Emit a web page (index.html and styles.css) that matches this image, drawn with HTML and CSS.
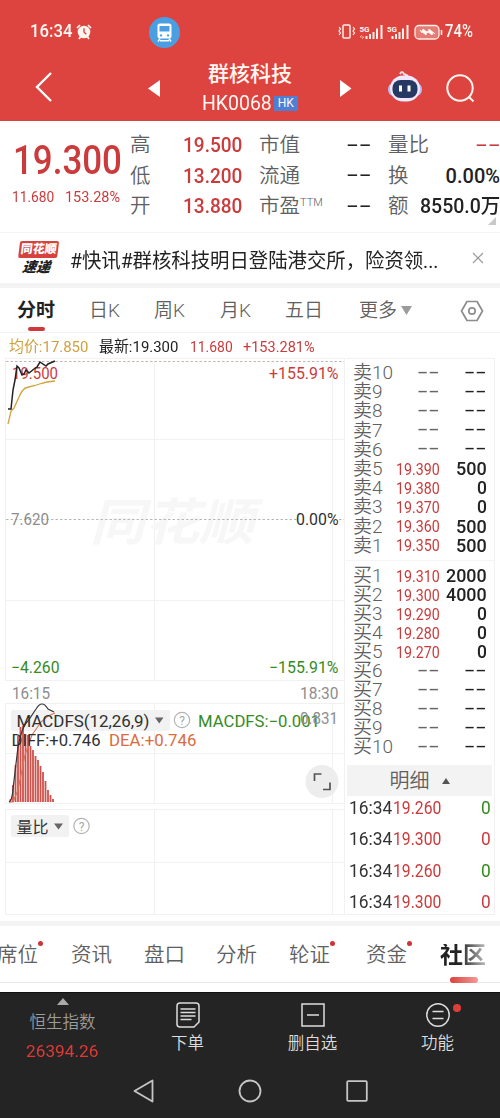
FILE: index.html
```html
<!DOCTYPE html>
<html lang="zh-CN">
<head>
<meta charset="utf-8">
<title>群核科技 HK0068</title>
<link rel="stylesheet" href="styles.css">
</head>
<body>
<header class="top">
  <div class="status">
    <span class="clock" data-w="42">16:34</span>
    <svg class="alarm" width="16" height="16" viewBox="0 0 16 16"><circle cx="8" cy="8" r="6.3" fill="#fff5ee"/><path d="M1 4 4 1M12 1l3 3M3 15l2-3M13 15l-2-3" stroke="#fff5ee" stroke-width="1.7"/><path d="M8 4.3V8l2.3 2.2" fill="none" stroke="#dd443f" stroke-width="1.4"/></svg>
    <svg class="train" width="31" height="31" viewBox="0 0 31 31"><circle cx="15.5" cy="15.5" r="15.5" fill="#4a9fe3"/><path fill="#fff" fill-rule="evenodd" d="M11 6.5h9q2.5 0 2.5 2.5v10q0 2.500-2.500 2.500h-9q-2.500 0-2.500-2.500V9q0-2.500 2.500-2.500zM10.500 9v5.500h10V9zM12 17.200a1.200 1.200 0 1 0 .1 0zM19 17.200a1.200 1.200 0 1 0 .1 0z"/><path d="m11 21.500-2 3M20 21.500l2 3M11 23.800h9" stroke="#fff" stroke-width="1.500"/></svg>
    <div class="signals">
      <svg width="105" height="18" viewBox="0 0 105 18" fill="none" stroke="#fff0e9">
        <rect x="5" y="2" width="7" height="13" rx="1" stroke-width="1.500"/><path d="M1 4l1.500 2L1 8l1.500 2L1 12M15 4l1.500 2L15 8l1.500 2L15 12" stroke-width="1.200"/>
        <path d="M28.500 16v-3M32 16v-5M35.500 16v-7M39 16V5.500M43.500 16V2M54.500 16v-3M58 16v-5M61.500 16V9M65 16V5.500M69.500 16V2" stroke-width="2"/>
        <path d="m24 12-2 2h4l-2 2" stroke="#ffab91"/>
        <text class="g5" x="21.500" y="8.500">5G</text><text class="g5" x="49" y="8.500">5G</text>
        <rect x="77" y="2.500" width="24" height="13.500" rx="4" stroke-width="1.300" fill="#e47b74"/><path d="M103.500 7v5" stroke-width="1.600"/><path d="m82 7 6 5 1-4 5 4 1-3 2 2-6-5-1 4-5-4-1 4z" fill="#fff"/>
      </svg>
      <span class="clock" data-w="28">74%</span>
    </div>
  </div>
  <div class="nav">
    <svg width="18" height="30" viewBox="0 0 18 30"><path d="M16 1 2 15l14 14" fill="none" stroke="#fff" stroke-width="2.400"/></svg>
    <svg class="prev" width="12" height="17" viewBox="0 0 12 17"><path d="M12 0v17L0 8.500z" fill="#fff"/></svg>
    <div class="name"><h1>群核科技</h1><p><span class="code" data-w="70">HK0068</span><b>HK</b></p></div>
    <svg class="next" width="12" height="17" viewBox="0 0 12 17"><path d="M0 0v17l11.500-8.500z" fill="#fff"/></svg>
    <svg class="bot" width="34" height="32" viewBox="0 0 34 32"><path d="M12 3q2-4 4 0 2 1 4 2" fill="none" stroke="#ffdeda" stroke-width="2"/><rect x="0" y="12" width="34" height="13" rx="6" fill="#bdb9ef"/><rect x="2" y="4.500" width="30" height="26" rx="13" fill="#eee9ff"/><rect x="4.500" y="9" width="25" height="18" rx="8" fill="#263963"/><path d="M12.500 14.500v6M21 14.500v6" stroke="#fff" stroke-width="3"/></svg>
    <svg class="find" width="29" height="29" viewBox="0 0 29 29" fill="none" stroke="#fff4ef" stroke-width="2"><circle cx="14" cy="14" r="12.700"/><path d="m22.500 22.500 5 5"/></svg>
  </div>
</header>

<section class="quote">
  <div class="last">
    <strong data-w="109">19.300</strong>
    <p><span data-w="42.500">11.680</span><span data-w="55">153.28%</span></p>
  </div>
  <dl class="facts f1"><dt>高</dt><dd class="up"><span data-w="59">19.500</span></dd><dt>低</dt><dd class="up"><span data-w="59">13.200</span></dd><dt>开</dt><dd class="up"><span data-w="59">13.880</span></dd></dl>
  <dl class="facts f2"><dt>市值</dt><dd><i data-w="25">--</i></dd><dt>流通</dt><dd><i data-w="25">--</i></dd><dt>市盈<sup>TTM</sup></dt><dd><i data-w="25">--</i></dd></dl>
  <dl class="facts f3"><dt>量比</dt><dd class="up"><i data-w="25">--</i></dd><dt>换</dt><dd><span data-w="54">0.00%</span></dd><dt>额</dt><dd><span data-w="80">8550.0万</span></dd></dl>
  <svg class="corner" width="8" height="8" viewBox="0 0 8 8"><path d="M8 0v8H0z" fill="#c9c9c9"/></svg>
</section>

<section class="news">
  <div class="brand"><span>同花顺</span><em>速递</em></div>
  <p data-w="368">#快讯#群核科技明日登陆港交所，险资领...</p>
  <svg width="12" height="12" viewBox="0 0 12 12"><path d="m1 1 10 10M11 1 1 11" stroke="#9a9a9a" stroke-width="1.200"/></svg>
</section>

<nav class="periods">
  <span class="on">分时</span><span>日K</span><span>周K</span><span>月K</span><span>五日</span>
  <span class="more">更多<svg width="11" height="9" viewBox="0 0 11 9"><path d="M0 0h11L5.500 9z" fill="#9b9b9b"/></svg></span>
  <svg class="gear" width="24" height="22" viewBox="0 0 24 22" fill="none" stroke="#8d8d8d" stroke-width="1.700"><path d="M7 1.500h10L22.500 11 17 20.500H7L1.500 11z" stroke-linejoin="round"/><circle cx="12" cy="11" r="3.200"/></svg>
</nav>

<section class="legend"><span class="gold" data-w="79">均价:17.850</span><span data-w="79">最新:19.300</span><span class="up" data-w="43">11.680</span><span class="up" data-w="72">+153.281%</span></section>

<main class="market">
  <svg class="charts" width="346" height="563" viewBox="0 358 346 563">
    <g class="grid"><path d="M5 358.500h339M5 439.500h339M5 600.500h339M5 680.500h339M5.500 358v323M154.500 362v319M332.500 362v319M5 703.500h339M5 753.500h339M5 803.500h339M5.500 703v101M154.500 703v101M332.500 703v101M5 809.500h339M5 862.500h339M5 914.500h339M5.500 809v106M154.500 809v106M332.500 809v106M344.500 358v557"/></g>
    <text class="mark" x="90" y="540" textLength="164" lengthAdjust="spacingAndGlyphs">同花顺</text>
    <path d="M6 361.500h338" stroke="#c4b5ae" stroke-dasharray="2.500 2"/>
    <path d="M6 519.500h338" stroke="#b7b7b7" stroke-dasharray="2.500 2"/>
    <rect x="297" y="515" width="41" height="9" fill="#fff"/>
    <path d="M8 424l3-13 3-3 5-11q4-9 8-9.500l8-2 6-2 6-1.500 8-1" fill="none" stroke="#d0a43c" stroke-width="1.300"/>
    <g class="num">
      <text class="red" x="12" y="378.500" textLength="46" lengthAdjust="spacingAndGlyphs">19.500</text>
      <text class="red" x="269" y="378.500" textLength="69.500" lengthAdjust="spacingAndGlyphs">+155.91%</text>
      <text class="gray" x="11" y="524.500" textLength="38" lengthAdjust="spacingAndGlyphs">7.620</text>
      <text x="296" y="524.500" textLength="42.500" lengthAdjust="spacingAndGlyphs">0.00%</text>
      <text class="green" x="11" y="673" textLength="48.500" lengthAdjust="spacingAndGlyphs">−4.260</text>
      <text class="green" x="269" y="673" textLength="69.500" lengthAdjust="spacingAndGlyphs">−155.91%</text>
      <text class="gray" x="12" y="699" textLength="38" lengthAdjust="spacingAndGlyphs">16:15</text>
      <text class="gray" x="300" y="699" textLength="38.500" lengthAdjust="spacingAndGlyphs">18:30</text>
    </g>
    <path d="M8 409h3l2-19 2-10 2-14 2 2 3 7 2-1 2-4 3 3 5-4 3-2 3-5 6 4 2-2 7-3" fill="none" stroke="#222" stroke-width="1.500"/>
    <rect x="11" y="710" width="159" height="21" rx="2" fill="#f2f2f2"/>
    <path d="M10.500 802v-3M13 802v-17M15.500 802v-37M18 802v-66M20.500 802v-75M23 802v-76M25.500 802v-68M28 802v-67M30.500 802v-56M33 802v-52M35.500 802v-46M38 802v-42M40.500 802v-36M43 802v-30M45.500 802v-21M48 802v-12M50.500 802v-7M53 802v-3" stroke="#cf504b" stroke-width="1.800"/>
    <path d="M9 802h4l5-12 7-35 7-20 9-13 7-6 7-3" fill="none" stroke="#dc7556" stroke-width="1.100"/>
    <path d="M9 802q3-1 4-13l5-42q4-21 10-26l8-12q6-10 12 0l6 3" fill="none" stroke="#363636" stroke-width="1.200"/>
    <g class="num">
      <text x="16.500" y="726.500" textLength="133" lengthAdjust="spacingAndGlyphs">MACDFS(12,26,9)</text>
      <text x="198" y="726.500" textLength="122" lengthAdjust="spacingAndGlyphs" class="green">MACDFS:−0.001</text>
      <text class="gray" x="300" y="724" textLength="38" lengthAdjust="spacingAndGlyphs">0.831</text>
      <text x="11.500" y="745.500" textLength="89" lengthAdjust="spacingAndGlyphs">DIFF:+0.746</text>
      <text class="orange" x="109" y="745.500" textLength="87.500" lengthAdjust="spacingAndGlyphs">DEA:+0.746</text>
    </g>
    <path d="M155 717.500h8.500l-4.250 6z" fill="#666"/>
    <g fill="none" stroke="#b4b4b4" stroke-width="1.200"><circle cx="182" cy="720" r="7.700"/><circle cx="81.500" cy="826" r="7.700"/></g>
    <text class="help" x="182" y="724.500">?</text><text class="help" x="81.500" y="830.500">?</text>
    <circle cx="322" cy="781.500" r="16.500" fill="#ededed"/>
    <path d="M314.500 781v-7h7M330 782.500v7h-7" fill="none" stroke="#555" stroke-width="1.700"/>
    <rect x="11" y="815" width="58" height="22" rx="2" fill="#f2f2f2"/>
    <text class="ratio" x="16.500" y="832.500">量比</text><path d="M54 823.500h9l-4.500 6z" fill="#666"/>
  </svg>
  <aside class="book">
    <ul class="sell" id="sell"></ul>
    <ul class="buy" id="buy"></ul>
    <div class="detail">明细<svg width="8" height="6" viewBox="0 0 8 6"><path d="M0 6h8L4 0z" fill="#555"/></svg></div>
    <ul class="ticks">
      <li><span data-w="43">16:34</span><span class="up" data-w="48">19.260</span><span class="down" data-w="10">0</span></li>
      <li><span data-w="43">16:34</span><span class="up" data-w="48">19.300</span><span class="up" data-w="10">0</span></li>
      <li><span data-w="43">16:34</span><span class="up" data-w="48">19.260</span><span class="down" data-w="10">0</span></li>
      <li><span data-w="43">16:34</span><span class="up" data-w="48">19.300</span><span class="up" data-w="10">0</span></li>
    </ul>
  </aside>
</main>

<nav class="sections"><span class="dot">席位</span><span>资讯</span><span>盘口</span><span>分析</span><span class="dot">轮证</span><span class="dot">资金</span><span class="current">社区</span></nav>

<footer>
  <div class="actions">
    <div class="index"><svg width="12" height="7" viewBox="0 0 12 7"><path d="M0 7h12L6 0z" fill="#aaa"/></svg><span>恒生指数</span><b data-w="72">26394.26</b></div>
    <div><svg width="24" height="26" viewBox="0 0 24 26" fill="none" stroke="#ddd" stroke-width="1.500"><path d="M4 1h16q3 0 3 3v16l-5 5H4q-3 0-3-3V4q0-3 3-3zM4.500 7h15M4.500 10.500h15M4.500 14h15M4.500 17.500h11"/></svg><span>下单</span></div>
    <div><svg width="24" height="26" viewBox="0 0 24 26" fill="none" stroke="#ddd" stroke-width="1.500"><path d="M1 2h22v22H1zM6 13h12"/></svg><span>删自选</span></div>
    <div class="func"><svg width="24" height="26" viewBox="0 0 24 26" fill="none" stroke="#ddd" stroke-width="1.500"><circle cx="12" cy="13" r="11.200"/><path d="M6.500 9.500h11M6.500 16.500h11"/></svg><span>功能</span></div>
  </div>
  <div class="keys">
    <svg width="21" height="24" viewBox="0 0 21 24"><path d="M19.500 1.500v21L1.500 12z"/></svg>
    <svg width="24" height="24" viewBox="0 0 24 24"><circle cx="12" cy="12" r="10.500"/></svg>
    <svg width="22" height="22" viewBox="0 0 22 22"><rect x="1.200" y="1.200" width="19.600" height="19.600" rx="1"/></svg>
  </div>
</footer>
<script src="app.js"></script>
</body>
</html>
```

FILE: styles.css
```css
* { box-sizing: border-box; margin: 0; padding: 0; }
body { width: 500px; height: 1118px; overflow: hidden; background: #fff; color: #222; font-family: Roboto, "Noto Sans CJK SC", sans-serif; line-height: 1; }
ul { list-style: none; }
svg { display: block; flex: none; }
[data-w] { display: inline-block; white-space: nowrap; transform-origin: 0 50%; flex: none; }
.up { color: #cb3b3c; }
.down { color: #338a1c; }
.gold { color: #d0a03c; }

.top { height: 121px; background: #dd443f; color: #fff7f3; border-bottom: 1px solid #cf4644; }
.status { display: flex; align-items: center; height: 52px; padding: 12px 27px 0 30px; }
.clock { font-size: 17.5px; font-weight: 500; }
.alarm { margin-left: 4px; }
.train { margin: 0 0 0 57px; }
.signals { display: flex; align-items: center; gap: 2px; margin-left: auto; }
.g5 { font: 700 8px Roboto, sans-serif; fill: #fff4ef; stroke: none; }
.nav { display: flex; align-items: center; height: 69px; padding: 0 25px 0 35px; }
.nav > svg { margin-top: 1px; }
.nav > .prev { margin-left: 95px; margin-top: 3px; }
.name { width: 100px; margin-left: 40px; padding-top: 6px; }
.name h1 { font-size: 21px; font-weight: 500; text-align: center; line-height: 27px; white-space: nowrap; }
.name p { display: flex; align-items: center; gap: 2px; height: 31px; padding-left: 2px; }
.code { font-size: 20px; }
.name b { width: 24px; height: 15px; background: #4d7fd4; font: 400 12px/15px Roboto, sans-serif; text-align: center; flex: none; }
.nav > .next { margin-left: 40px; margin-top: 3px; }
.nav > .bot { margin-left: 36px; margin-top: 0; }
.nav > .find { margin-left: auto; margin-top: 3px; }

.quote { position: relative; display: flex; height: 112px; border-bottom: 1px solid #f3f3f3; }
.last { width: 130px; padding: 19px 0 0 13px; color: #cb3b3c; }
.last strong { font-size: 41px; font-weight: 500; }
.last p { display: flex; gap: 11px; margin: 9px 0 0 -1px; font-size: 15.5px; }
.facts { display: grid; grid-template-columns: auto auto; grid-template-rows: repeat(3, 30.5px); justify-content: space-between; align-items: center; height: 92px; padding-top: 9px; font-size: 20.5px; }
.f1 { width: 112px; }
.f2 { width: 112px; margin-left: 17px; }
.f3 { width: 112px; margin-left: 17px; grid-template-columns: 21px 91px; }
.facts dt { color: #606060; font-weight: 350; white-space: nowrap; }
.facts dd { display: flex; justify-content: flex-end; font-size: 20px; font-weight: 500; }
.facts i { margin-top: -3px; font-family: "Liberation Sans", sans-serif; font-style: normal; }
.facts sup { font-size: 11px; vertical-align: 7px; line-height: 0; }
.corner { position: absolute; right: 4px; bottom: 7px; }

.news { display: flex; align-items: center; height: 55px; padding: 0 16px 0 17px; border-bottom: 5px solid #f4f4f4; }
.brand { display: flex; flex-direction: column; align-items: center; gap: 1px; width: 41px; height: 35px; transform: skewX(-7deg); font-weight: 900; }
.brand span { width: 39px; height: 17px; border-radius: 2px; background: #d6423e; color: #fff; font-size: 12px; line-height: 17px; text-align: center; }
.brand em { font-size: 14px; line-height: 17px; }
.news p { margin-left: 12px; padding-top: 5px; font-size: 20px; }
.news > svg { margin-left: auto; }

.periods { display: grid; grid-template-columns: 73px 65px 66px 65px 74px 101px 24px; height: 45px; padding: 1px 0 0 17px; align-items: center; border-bottom: 1px solid #f3f3f3; color: #606060; font-size: 19px; font-weight: 350; }
.periods > * { position: relative; left: -1px; }
.periods .on { left: 0; color: #222; font-weight: 700; }
.on::after { content: ""; position: absolute; left: 11px; top: 26px; width: 17px; height: 4px; border-radius: 2px; background: #cf393a; }
.more { display: flex; align-items: center; gap: 4px; }
.legend { display: flex; align-items: center; gap: 11px; height: 25px; padding: 5px 9px 0; font-size: 15.5px; }

.market { display: flex; height: 563px; }
.grid { fill: none; stroke: #f1f1f1; }
.mark { font: italic 700 50px "Noto Sans CJK SC", sans-serif; fill: #f7f7f7; }
.num { font-family: Roboto, sans-serif; font-size: 16px; fill: #303030; }
.red { fill: #cb3b3c; }
.green { fill: #358b1e; }
.gray { fill: #8d8d8d; }
.orange { fill: #db6b3d; }
.help { font: 12px Roboto, sans-serif; fill: #a8a8a8; text-anchor: middle; }
.ratio { font: 16px "Noto Sans CJK SC", sans-serif; fill: #333; }
.book { width: 149px; height: 557px; border: 1px solid #f1f1f1; border-left: 0; }
.book .sell { padding-top: 4px; height: 202px; border-bottom: 1px solid #f5f5f5; }
.book .buy { padding-top: 5px; height: 204px; }
.book li { display: flex; align-items: center; height: 19.2px; padding-left: 7px; }
.buy li { height: 19px; }
.lab { width: 42px; font-size: 19px; font-weight: 350; color: #606060; white-space: nowrap; }
.price { display: flex; justify-content: flex-end; width: 44.500px; padding-top: 2px; font-size: 16px; }
.vol { display: flex; justify-content: flex-end; width: 47px; font-size: 19px; font-weight: 500; }
.none { padding: 0 0 3px; font-family: "Liberation Sans", sans-serif; font-size: 19px; color: #666; }
.vol.none { color: #222; }
.detail { display: flex; align-items: center; justify-content: center; gap: 12px; width: 145px; height: 31px; margin-left: 1px; background: #f3f3f3; color: #606060; font-size: 20px; font-weight: 350; }
.book .ticks li { height: 31.3px; padding: 0 3px 0 3px; font-size: 19px; color: #333; }
.ticks { margin-top: -4px; }
.ticks li span:nth-child(2) { margin-left: 1px; }
.ticks li span:last-child { margin-left: auto; }

.sections { position: relative; display: grid; grid-template-columns: 71px 73px 72px 73px 77px 74px 60px; align-items: center; height: 62px; padding-top: 3px; border-top: 5px solid #f4f4f4; border-bottom: 1px solid #e9e9e9; color: #606060; font-size: 20.5px; font-weight: 350; }
.sections span { position: relative; white-space: nowrap; }
.sections span:first-child { left: -3px; }
.dot::after { content: ""; position: absolute; left: 41px; top: -4px; width: 5px; height: 5px; border-radius: 50%; background: #cc3537; }
.sections .current { font-size: 23px; font-weight: 700; background: linear-gradient(90deg, #222 20px, #ccc 48px); background-clip: text; color: transparent; }
.sections::after { content: ""; position: absolute; left: 450px; bottom: -1px; width: 28px; height: 6px; border-radius: 3px; background: linear-gradient(90deg, #db423e, #f29b96); }

footer { margin-top: 9px; height: 126px; background: #242424; color: #ddd; border-top: 1px solid #111; }
.actions { display: grid; grid-template-columns: repeat(4, 125px); height: 70px; }
.actions > div { display: flex; flex-direction: column; align-items: center; padding-top: 9px; font-size: 16.5px; font-weight: 350; position: relative; }
.actions > div > span { margin-top: 8px; }
.actions > .index { padding-top: 5px; color: #9c9c9c; }
.actions .index span { margin-top: 10px; }
.index b { margin-top: 11px; color: #df3937; font-size: 17px; font-weight: 400; }
.func::after { content: ""; position: absolute; left: 78px; top: 11px; width: 8px; height: 8px; border-radius: 50%; background: #dc3e38; }
.keys { display: flex; align-items: center; height: 55px; padding: 1px 0 0 133px; }
.keys svg { fill: none; stroke: #c5c5c5; stroke-width: 1.800; stroke-linejoin: round; }
.keys svg + svg { margin-left: 84px; }
```

FILE: app.js
```js
// Build the ten sell and ten buy levels.
const asks = [["10"], ["9"], ["8"], ["7"], ["6"], ["5", "19.390", "500"], ["4", "19.380", "0"], ["3", "19.370", "0"], ["2", "19.360", "500"], ["1", "19.350", "500"]];
const bids = [["1", "19.310", "2000"], ["2", "19.300", "4000"], ["3", "19.290", "0"], ["4", "19.280", "0"], ["5", "19.270", "0"], ["6"], ["7"], ["8"], ["9"], ["10"]];

function fill(id, side, levels) {
  document.getElementById(id).innerHTML = levels.map(([level, price, volume]) => {
    const empty = price ? "" : " none";
    return `<li><span class="lab">${side}${level}</span>` +
      `<span class="price ${price ? "up" : ""}${empty}"><span data-w="${price ? 43.5 : 23}">${price || "--"}</span></span>` +
      `<span class="vol${empty}"><span data-w="${volume ? volume.length * 10.1 : 23}">${volume || "--"}</span></span></li>`;
  }).join("");
}
fill("sell", "卖", asks);
fill("buy", "买", bids);

document.querySelectorAll("[data-w]").forEach((el) => {
  const natural = el.offsetWidth;
  const width = Number(el.dataset.w);
  el.style.transform = `scaleX(${width / natural})`;
  el.style.marginRight = `${width - natural}px`;
});
```
